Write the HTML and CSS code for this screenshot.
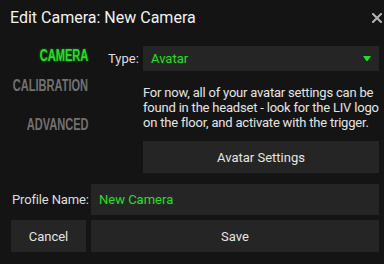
FILE: index.html
```html
<!DOCTYPE html>
<html lang="en">
<head>
<meta charset="utf-8">
<title>Edit Camera</title>
<link rel="stylesheet" href="styles.css">
</head>
<body>
<div class="dialog">
  <header class="header">
    <h1 class="title">Edit Camera: New Camera</h1>
    <button class="close" aria-label="Close">
      <svg width="10" height="10" viewBox="0 0 10 10"><path d="M1 1 L9 9 M9 1 L1 9" stroke="#b4b4b4" stroke-width="2" stroke-linecap="square"/></svg>
    </button>
  </header>
  <div class="main">
    <nav class="nav">
      <div class="nav-item active"><span>CAMERA</span></div>
      <div class="nav-item second"><span>CALIBRATION</span></div>
      <div class="nav-item third"><span>ADVANCED</span></div>
    </nav>
    <section class="content">
      <div class="type-row">
        <span class="label">Type:</span>
        <div class="select">
          <span class="value">Avatar</span>
          <svg class="arrow" width="8" height="5" viewBox="0 0 8 5"><polygon points="0,0 8,0 4.6,5 3.4,5" fill="#22e022"/></svg>
        </div>
      </div>
      <div class="details">
        <p class="desc">For now, all of your avatar settings can be found in the headset - look for the LIV logo on the floor, and activate with the trigger.</p>
        <button class="btn wide">Avatar Settings</button>
      </div>
    </section>
  </div>
  <div class="form">
    <span class="label profile-label">Profile Name:</span>
    <div class="input"><span class="value">New Camera</span></div>
    <button class="btn">Cancel</button>
    <button class="btn">Save</button>
  </div>
</div>
</body>
</html>
```
FILE: styles.css
```css
html, body {
  margin: 0;
  padding: 0;
}
body {
  width: 384px;
  height: 264px;
  background: #141414;
  font-family: Roboto, "Noto Sans", sans-serif;
  color: #dedede;
  overflow: hidden;
}
.dialog {
  padding: 0 5px 0 11px;
}
.header {
  display: flex;
  justify-content: space-between;
  align-items: flex-start;
  height: 46px;
  box-sizing: border-box;
  padding-top: 8px;
}
.title {
  margin: 0 0 0 -1px;
  font-size: 16px;
  line-height: 20px;
  font-weight: 400;
  color: #f2f2f2;
}
.close {
  background: none;
  border: 0;
  padding: 0;
  margin: 5px -3px 0 0;
  width: 10px;
  height: 10px;
  display: flex;
}
.main {
  display: flex;
}
.nav {
  width: 77px;
  flex: none;
}
.nav-item {
  display: flex;
  justify-content: flex-end;
  font-family: "Liberation Sans", Arial, sans-serif;
  font-weight: 700;
  font-size: 16px;
  line-height: 20px;
  color: #717171;
  white-space: nowrap;
}
.nav-item span {
  flex: none;
  display: block;
  transform: scaleX(0.69);
  transform-origin: right center;
}
.nav-item.active {
  color: #22e022;
  text-shadow: 0 0 3px rgba(34, 224, 34, 0.5);
}
.nav-item.second {
  margin-top: 10px;
}
.nav-item.third {
  margin-top: 19px;
}
.content {
  flex: 1;
  margin-left: 20px;
}
.type-row {
  display: flex;
  align-items: center;
}
.label {
  font-size: 13px;
  color: #dedede;
}
.type-row .label {
  width: 35px;
  flex: none;
}
.select {
  flex: 1;
  height: 25px;
  background: #252525;
  display: flex;
  align-items: center;
  justify-content: space-between;
  padding: 0 8px;
}
.value {
  color: #22e022;
  font-size: 13px;
}
.details {
  margin-left: 35px;
}
.desc {
  margin: 14px 0 0;
  font-size: 13px;
  line-height: 15px;
  letter-spacing: -0.2px;
  color: #e4e4e4;
}
.btn {
  font-family: Roboto, "Noto Sans", sans-serif;
  font-size: 13px;
  color: #e4e4e4;
  background: #252525;
  border: 0;
  height: 32px;
  padding: 0;
  display: block;
}
.btn.wide {
  width: 100%;
  margin-top: 11px;
}
.form {
  margin-top: 11px;
  display: grid;
  grid-template-columns: 75px 1fr;
  grid-template-rows: 31px 32px;
  column-gap: 5px;
  row-gap: 5px;
}
.profile-label {
  align-self: center;
  padding-left: 1px;
  white-space: nowrap;
  letter-spacing: -0.15px;
}
.input {
  background: #252525;
  display: flex;
  align-items: center;
  padding: 0 8px;
}
```
